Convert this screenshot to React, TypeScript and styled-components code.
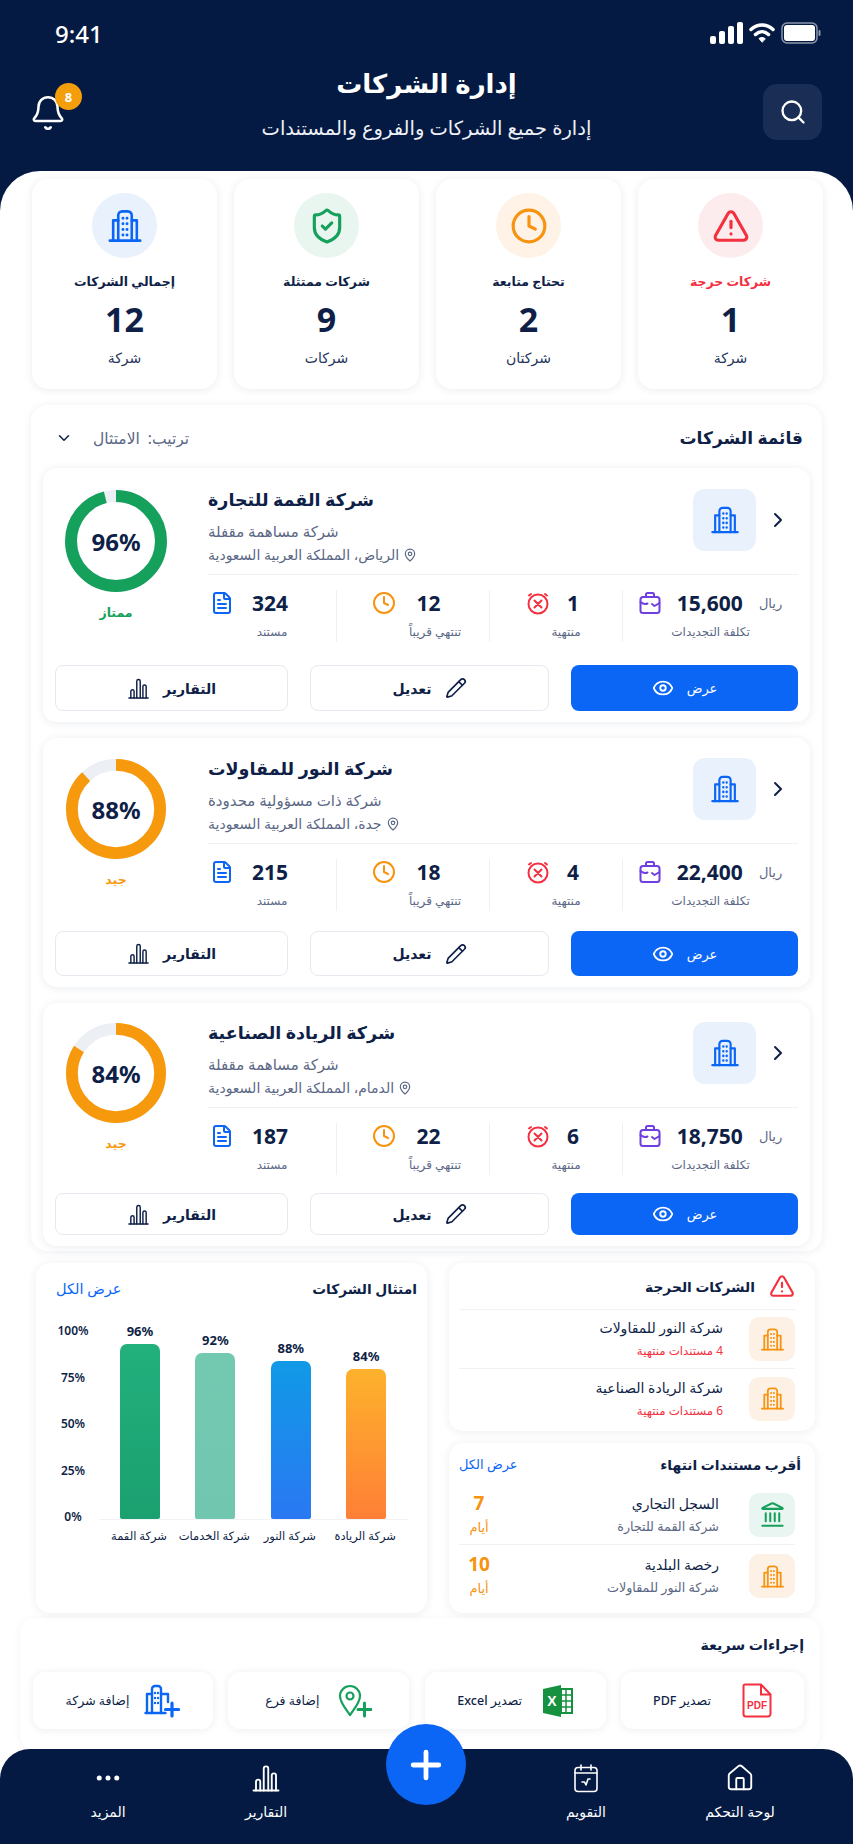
import React from "react";
import styled, { createGlobalStyle } from "styled-components";
import {
  Bell,
  ChevronDown,
  ChevronRight,
  Clock,
  Ellipsis,
  Eye,
  FileText,
  House,
  Landmark,
  MapPin,
  Pencil,
  Plus,
  Search,
  ShieldCheck,
  TriangleAlert,
} from "lucide-react";

const NAVY = "#041a42";
const INK = "#0f1f47";
const MUTED = "#5b6785";
const BLUE = "#0b66f5";
const ORANGE = "#f7930f";
const GREEN = "#15a05c";
const RED = "#f4303f";

const GlobalStyle = createGlobalStyle`
  html, body { margin: 0; padding: 0; }
  body {
    font-family: "Noto Sans", "DejaVu Sans", sans-serif;
    color: ${INK};
  }
  * { box-sizing: border-box; }
`;

const Page = styled.div`
  width: 853px;
  height: 1844px;
  background: ${NAVY};
  display: flex;
  flex-direction: column;
  overflow: hidden;
`;

const Header = styled.header`
  height: 171px;
  flex: none;
  color: #fff;
  display: flex;
  flex-direction: column;
`;

const StatusBar = styled.div`
  direction: ltr;
  height: 66px;
  padding: 0 32px 0 55px;
  display: flex;
  align-items: center;
  justify-content: space-between;
  font-size: 24px;
  font-weight: 500;
`;

const StatusIcons = styled.div`
  display: flex;
  gap: 6px;
  align-items: center;
`;

const HeaderRow = styled.div`
  direction: ltr;
  flex: 1;
  padding: 0 31px;
  display: grid;
  grid-template-columns: 80px 1fr 80px;
  align-items: start;
`;

const BellWrap = styled.div`
  position: relative;
  width: 50px;
  height: 60px;
  margin: 28px 0 0 -2px;
`;

const BellBadge = styled.span`
  position: absolute;
  left: 26px;
  top: -11px;
  width: 27px;
  height: 27px;
  border-radius: 50%;
  background: #f59e0b;
  font-size: 13px;
  font-weight: 700;
  display: flex;
  align-items: center;
  justify-content: center;
`;

const HeaderTitles = styled.div`
  direction: rtl;
  text-align: center;
`;

const HeaderTitle = styled.h1`
  margin: -3px 0 0;
  font-size: 26px;
  line-height: 40px;
  font-weight: 700;
`;

const HeaderSub = styled.p`
  margin: 10px 0 0;
  font-size: 19.500px;
  line-height: 30px;
  color: #eef1f7;
`;

const SearchButton = styled.div`
  justify-self: end;
  margin-top: 18px;
  width: 59px;
  height: 56px;
  border-radius: 14px;
  background: #1a2d54;
  display: flex;
  align-items: center;
  justify-content: center;
`;

const Sheet = styled.main`
  flex: 1;
  min-height: 0;
  position: relative;
  background: #fff;
  border-radius: 40px 40px 0 0;
  padding-top: 8px;
  display: flex;
  flex-direction: column;
`;

const StatsGrid = styled.section`
  padding: 0 30px;
  display: grid;
  grid-template-columns: repeat(4, 185px);
  gap: 17px;
`;

const StatCard = styled.div`
  height: 210px;
  border-radius: 16px;
  background: #fff;
  box-shadow: 0 1px 8px rgba(20, 40, 90, 0.09);
  padding-top: 14px;
  display: flex;
  flex-direction: column;
  align-items: center;
`;

const StatCircle = styled.div<{ $bg: string }>`
  width: 65px;
  height: 65px;
  border-radius: 50%;
  background: ${(p) => p.$bg};
  display: flex;
  align-items: center;
  justify-content: center;
`;

const StatLabel = styled.div<{ $red?: boolean }>`
  margin-top: 13px;
  font-size: 12.500px;
  line-height: 22px;
  font-weight: 600;
  color: ${(p) => (p.$red ? RED : INK)};
`;

const StatValue = styled.div`
  margin-top: 5px;
  font-size: 34px;
  line-height: 42px;
  font-weight: 700;
`;

const StatUnit = styled.div`
  margin-top: 7px;
  font-size: 14px;
  line-height: 22px;
  color: #24345c;
  font-weight: 500;
`;

const ListPanel = styled.section`
  margin: 16px 31px 0;
  padding: 0 12px 5px;
  border-radius: 16px;
  box-shadow: 0 1px 8px rgba(20, 40, 90, 0.08);
`;

const ListHead = styled.div`
  height: 63px;
  padding: 2px 7px 0 12px;
  display: flex;
  align-items: center;
  justify-content: space-between;
`;

const ListTitle = styled.h2`
  margin: 0;
  font-size: 17px;
  font-weight: 700;
`;

const SortBox = styled.div`
  display: flex;
  align-items: center;
  gap: 20px;
  font-size: 15.500px;
  color: ${MUTED};
  white-space: pre;
`;

const CompanyCard = styled.article<{ $h: number; $pad: number }>`
  height: ${(p) => p.$h}px;
  margin-bottom: 16px;
  padding: ${(p) => p.$pad}px 12px 11px;
  border-radius: 14px;
  background: #fff;
  box-shadow: 0 1px 8px rgba(20, 40, 90, 0.09);
  display: flex;
  flex-direction: column;
  justify-content: space-between;
  &:last-child { margin-bottom: 0; }
`;

const CardTop = styled.div`
  display: flex;
`;

const CardBody = styled.div`
  flex: 1;
  min-width: 0;
`;

const CompanyHead = styled.div`
  display: flex;
  align-items: flex-start;
  height: 77px;
`;

const ChevronSlot = styled.div`
  width: 32px;
  height: 62px;
  display: flex;
  align-items: center;
  justify-content: center;
  margin-right: 4px;
`;

const CompanyTile = styled.div`
  width: 63px;
  height: 62px;
  border-radius: 12px;
  background: #e9f1fd;
  margin-right: 6px;
  display: flex;
  align-items: center;
  justify-content: center;
`;

const CompanyInfo = styled.div`
  margin: -4px auto 0 0;
  display: flex;
  flex-direction: column;
  align-items: flex-end;
`;

const CompanyName = styled.h3`
  margin: 0 0 6px;
  font-size: 17.500px;
  line-height: 28px;
  font-weight: 700;
`;

const CompanyMeta = styled.div<{ $size: number }>`
  font-size: ${(p) => p.$size}px;
  line-height: 24px;
  color: ${MUTED};
  display: flex;
  align-items: center;
  gap: 4px;
`;

const Metrics = styled.div`
  margin-top: 8px;
  border-top: 1px solid #eef0f5;
  padding-top: 15px;
  display: grid;
  grid-template-columns: 176px 133px 153px 128px;
`;

const Metric = styled.div`
  border-left: 1px solid #eef0f5;
  height: 52px;
  display: flex;
  flex-direction: column;
  align-items: center;
  &:last-child { border-left: 0; }
`;

const MetricTop = styled.div<{ $right?: number; $gap: number }>`
  direction: ltr;
  display: flex;
  align-items: center;
  gap: ${(p) => p.$gap}px;
  height: 26px;
  margin-right: ${(p) => p.$right ?? 0}px;
`;

const MetricValue = styled.span`
  font-size: 21px;
  font-weight: 700;
`;

const Currency = styled.span`
  font-size: 13px;
  color: ${MUTED};
`;

const MetricLabel = styled.div<{ $left?: number }>`
  margin-top: 7px;
  margin-left: ${(p) => p.$left ?? 0}px;
  font-size: 12px;
  line-height: 18px;
  color: ${MUTED};
`;

const RingColumn = styled.div`
  width: 153px;
  flex: none;
  padding: 1px 31px 0 0;
  display: flex;
  flex-direction: column;
  align-items: center;
`;

const RingBox = styled.div<{ $size: number }>`
  position: relative;
  width: ${(p) => p.$size}px;
  height: ${(p) => p.$size}px;
`;

const RingText = styled.div`
  position: absolute;
  inset: 0;
  display: flex;
  align-items: center;
  justify-content: center;
  direction: ltr;
  font-size: 24px;
  font-weight: 700;
`;

const RingLabel = styled.div<{ $color: string }>`
  margin-top: 11px;
  font-size: 12.500px;
  line-height: 20px;
  font-weight: 600;
  color: ${(p) => p.$color};
`;

const Actions = styled.div`
  display: grid;
  grid-template-columns: 227px 239px 233px;
  gap: 22px;
  justify-content: space-between;
`;

const ActionButton = styled.div<{ $primary?: boolean; $h: number }>`
  height: ${(p) => p.$h}px;
  border-radius: 8px;
  border: ${(p) => (p.$primary ? "0" : "1.5px solid #e6e9ef")};
  background: ${(p) => (p.$primary ? BLUE : "#fff")};
  color: ${(p) => (p.$primary ? "#fff" : INK)};
  font-size: ${(p) => (p.$primary ? 13 : 14)}px;
  font-weight: ${(p) => (p.$primary ? 500 : 600)};
  display: flex;
  align-items: center;
  justify-content: center;
  gap: 13px;
`;

const LowerGrid = styled.section`
  margin-top: 12px;
  padding: 0 38px 0 36px;
  display: grid;
  grid-template-columns: 366px 391px;
  justify-content: space-between;
`;

const RightStack = styled.div`
  display: flex;
  flex-direction: column;
  gap: 12px;
`;

const Panel = styled.div<{ $h: number }>`
  height: ${(p) => p.$h}px;
  border-radius: 14px;
  background: #fff;
  box-shadow: 0 1px 10px rgba(20, 40, 90, 0.08);
`;

const PanelInner = styled.div`
  padding: 0 20px 0 10px;
`;

const PanelHead = styled.div<{ $h: number }>`
  height: ${(p) => p.$h}px;
  display: flex;
  align-items: center;
  justify-content: space-between;
`;

const AlertHead = styled(PanelHead)`
  justify-content: flex-start;
  gap: 14px;
  border-bottom: 1px solid #f0f2f6;
`;

const DocsHead = styled(PanelHead)`
  margin-right: -6px;
`;

const PanelTitle = styled.h3`
  margin: 0;
  font-size: 13.800px;
  font-weight: 700;
`;

const ViewAll = styled.span<{ $size: number }>`
  font-size: ${(p) => p.$size}px;
  font-weight: 500;
  color: ${BLUE};
`;

const MiniRow = styled.div<{ $h: number; $gap: number }>`
  height: ${(p) => p.$h}px;
  display: flex;
  align-items: center;
  gap: ${(p) => p.$gap}px;
  border-bottom: 1px solid #f0f2f6;
  &:last-child { border-bottom: 0; }
`;

const MiniTile = styled.div<{ $bg: string }>`
  width: 46px;
  height: 44px;
  flex: none;
  border-radius: 10px;
  background: ${(p) => p.$bg};
  display: flex;
  align-items: center;
  justify-content: center;
`;

const MiniText = styled.div`
  flex: 1;
  min-width: 0;
`;

const MiniName = styled.div`
  font-size: 14px;
  line-height: 22px;
  font-weight: 500;
`;

const MiniSub = styled.div<{ $color: string; $size: number }>`
  font-size: ${(p) => p.$size}px;
  line-height: 22px;
  color: ${(p) => p.$color};
`;

const Days = styled.div`
  width: 40px;
  text-align: center;
  color: ${ORANGE};
  font-size: 13px;
  line-height: 24px;
`;

const DaysNum = styled.div`
  font-size: 19px;
  font-weight: 700;
`;

const ChartHead = styled(PanelHead)`
  padding: 0 10px 0 20px;
`;

const ChartArea = styled.div`
  direction: ltr;
  display: flex;
  padding: 8px 0 0 20px;
  height: 207px;
`;

const YAxis = styled.div`
  width: 34px;
  flex: none;
  height: 200px;
  margin-top: 3px;
  display: flex;
  flex-direction: column;
  justify-content: space-between;
  align-items: center;
  font-size: 12px;
  font-weight: 600;
  line-height: 14px;
`;

const BarsArea = styled.div`
  margin-left: 9px;
  width: 310px;
  height: 199px;
  border-bottom: 1px solid #f1f3f7;
  padding-left: 21px;
  display: flex;
  align-items: flex-end;
  gap: 35.400px;
`;

const BarCol = styled.div`
  width: 40px;
  display: flex;
  flex-direction: column;
  align-items: center;
`;

const BarValue = styled.div`
  font-size: 13px;
  line-height: 20px;
  font-weight: 700;
  margin-bottom: 3px;
`;

const Bar = styled.div<{ $from: string; $to: string }>`
  width: 40px;
  border-radius: 7px 7px 2px 2px;
  background: linear-gradient(180deg, ${(p) => p.$from}, ${(p) => p.$to});
`;

const BarLabels = styled.div`
  direction: ltr;
  display: flex;
  padding-left: 66px;
  gap: 1.400px;
  margin-top: 7px;
`;

const BarLabel = styled.div`
  direction: rtl;
  width: 74px;
  text-align: center;
  white-space: nowrap;
  font-size: 11.500px;
  line-height: 18px;
  font-weight: 500;
`;

const QuickPanel = styled.section`
  margin: 5px 33px 0 20px;
  padding: 0 16px 0 13px;
  height: 131px;
  flex: none;
  border-radius: 14px;
  box-shadow: 0 1px 8px rgba(20, 40, 90, 0.05);
`;

const QuickTitle = styled.h3`
  margin: 0 0 1px;
  height: 53px;
  display: flex;
  align-items: center;
  font-size: 14.200px;
  font-weight: 700;
`;

const QuickGrid = styled.div`
  display: grid;
  grid-template-columns: 183px 181px 181px 180px;
  justify-content: space-between;
`;

const QuickButton = styled.div<{ $gap: number }>`
  height: 57px;
  border-radius: 12px;
  background: #fff;
  box-shadow: 0 1px 8px rgba(20, 40, 90, 0.08);
  display: flex;
  align-items: center;
  justify-content: center;
  gap: ${(p) => p.$gap}px;
  font-size: 12.500px;
  font-weight: 500;
`;

const BottomNav = styled.nav`
  margin-top: auto;
  height: 95px;
  flex: none;
  border-radius: 30px 30px 0 0;
  background: ${NAVY};
  color: #fff;
  padding: 0 38px;
  display: grid;
  grid-template-columns: 150px 158px 1fr 176px 140px;
`;

const NavItem = styled.div`
  display: flex;
  flex-direction: column;
  align-items: center;
  padding-top: 14px;
  font-size: 14px;
  gap: 9px;
  white-space: nowrap;
`;

const Fab = styled.div`
  position: absolute;
  left: 386px;
  bottom: 39px;
  width: 80px;
  height: 81px;
  border-radius: 50%;
  background: ${BLUE};
  display: flex;
  align-items: center;
  justify-content: center;
`;

const BuildingIcon = ({ size = 30, color = BLUE }: { size?: number; color?: string }) => (
  <svg width={size} height={size} viewBox="0 0 32 32" fill="none" stroke={color} strokeWidth="2.300" strokeLinecap="round" strokeLinejoin="round">
    <path d="M2.500 29h27" />
    <path d="M10 29V6.500A3.500 3.500 0 0 1 13.500 3h5A3.500 3.500 0 0 1 22 6.500V29" />
    <path d="M10 11H5.500v18M22 11h4.500v18" />
    <path d="M14.200 9v.1M17.800 9v.1M14.200 14v.1M17.800 14v.1M14.200 19v.1M17.800 19v.1M14.200 24v.1M17.800 24v.1" strokeWidth="2.600" />
  </svg>
);

const ReportsIcon = ({ size = 24, color = "#fff" }: { size?: number; color?: string }) => (
  <svg width={size} height={size} viewBox="0 0 24 24" fill="none" stroke={color} strokeWidth="1.500" strokeLinecap="round" strokeLinejoin="round">
    <path d="M2 22h20" />
    <path d="M4 22v-7a1.700 1.700 0 0 1 3.400 0v7" />
    <path d="M10.200 22V4.500a1.800 1.800 0 0 1 3.600 0V22" />
    <path d="M16.600 22V10a1.700 1.700 0 0 1 3.400 0v12" />
  </svg>
);

const WalletIcon = () => (
  <svg width="22" height="24" viewBox="0 0 22 24" fill="none" stroke="#6d3fe0" strokeWidth="2" strokeLinecap="round" strokeLinejoin="round">
    <rect x="1.500" y="6" width="19" height="16" rx="2.500" />
    <path d="M7 6V3.500A1.500 1.500 0 0 1 8.500 2h5A1.500 1.500 0 0 1 15 3.500V6" />
    <path d="M1.500 11c3 2.500 5 2.500 7 1.500M13 13l2.500 2 5-3" />
  </svg>
);

const ExpiredIcon = () => (
  <svg width="24" height="24" viewBox="0 0 24 24" fill="none" stroke={RED} strokeWidth="2" strokeLinecap="round">
    <circle cx="12" cy="13" r="9.500" />
    <path d="M8.500 9.500l7 7M15.500 9.500l-7 7" />
    <path d="M3 4.500L5 3M21 4.500L19 3" />
  </svg>
);

const SignalIcon = () => (
  <svg width="33" height="22" viewBox="0 0 33 22" fill="#fff">
    <rect x="0" y="14" width="6" height="8" rx="2" />
    <rect x="9" y="9" width="6" height="13" rx="2" />
    <rect x="18" y="4" width="6" height="18" rx="2" />
    <rect x="27" y="0" width="6" height="22" rx="2" />
  </svg>
);

const WifiIcon = () => (
  <svg width="26" height="22" viewBox="0 0 26 22" fill="none" stroke="#fff" strokeWidth="3.500" strokeLinecap="round">
    <path d="M2 7.500c6.500-6 15.500-6 22 0" />
    <path d="M6.500 12.500c4-3.800 9-3.800 13 0" />
    <path d="M13 20l-3-3.500c1.800-1.400 4.200-1.400 6 0z" fill="#fff" strokeWidth="1" strokeLinejoin="round" />
  </svg>
);

const BatteryIcon = () => (
  <svg width="40" height="22" viewBox="0 0 40 22">
    <rect x="1" y="1" width="35" height="20" rx="5" fill="none" stroke="#8b97ad" strokeWidth="1.500" />
    <rect x="3" y="3" width="31" height="16" rx="3" fill="#fff" />
    <rect x="37.500" y="8" width="2" height="6" rx="1" fill="#8b97ad" />
  </svg>
);

const CalendarIcon = () => (
  <svg width="28" height="30" viewBox="0 0 28 30" fill="none" stroke="#fff" strokeWidth="1.600" strokeLinecap="round" strokeLinejoin="round">
    <rect x="3" y="4.500" width="22" height="24" rx="3" />
    <path d="M3 10h22M9 2v5M19 2v5" />
    <path d="M10 19h2.500l1.500 3 2-6h2" />
  </svg>
);

const PdfIcon = () => (
  <svg width="30" height="35" viewBox="0 0 30 35" fill="none">
    <path d="M3 1.500h16l9.500 10V31a2.500 2.500 0 0 1-2.500 2.500H4A2.500 2.500 0 0 1 1.500 31V3A1.500 1.500 0 0 1 3 1.500z" stroke={RED} strokeWidth="2" />
    <path d="M19 1.500v10h9.500" stroke={RED} strokeWidth="2" />
    <text x="15" y="26" textAnchor="middle" fontSize="10" fontWeight="700" fill={RED} fontFamily="Liberation Sans, sans-serif">PDF</text>
  </svg>
);

const ExcelIcon = () => (
  <svg width="30" height="32" viewBox="0 0 30 32">
    <path d="M0 4l18-4v32L0 28z" fill="#15913f" />
    <rect x="18" y="4" width="11" height="24" fill="#fff" stroke="#15913f" strokeWidth="2" />
    <path d="M18 10h11M18 16h11M18 22h11M23 4v24" stroke="#15913f" strokeWidth="1.500" />
    <text x="9" y="21" textAnchor="middle" fontSize="14" fontWeight="700" fill="#fff" fontFamily="Liberation Sans, sans-serif">X</text>
  </svg>
);

const AddCompanyIcon = () => (
  <svg width="36" height="34" viewBox="0 0 36 34" fill="none" stroke={BLUE} strokeWidth="2.400" strokeLinecap="round" strokeLinejoin="round">
    <path d="M1.500 29h20" />
    <path d="M8 29V5a3 3 0 0 1 3-3h3a3 3 0 0 1 3 3v24" />
    <path d="M8 10H3v19M17 10h7v8" />
    <path d="M11 9v.1M14 9v.1M11 14v.1M14 14v.1M11 19v.1M14 19v.1" />
    <path d="M28 19v13M21.500 25.500h13" strokeWidth="3.200" />
  </svg>
);

const AddBranchIcon = () => (
  <svg width="34" height="34" viewBox="0 0 34 34" fill="none" stroke={GREEN} strokeWidth="2.200" strokeLinecap="round" strokeLinejoin="round">
    <path d="M12 31C7 24 2 18.500 2 12a10 10 0 0 1 20 0c0 6.500-5 12-10 19z" />
    <circle cx="12" cy="12" r="3.500" />
    <path d="M26.500 19v13M20 25.500h13" stroke={GREEN} strokeWidth="3" />
  </svg>
);

const Ring = ({ value, color, size }: { value: number; color: string; size: number }) => {
  const r = 45;
  const c = 2 * Math.PI * r;
  return (
    <RingBox $size={size}>
      <svg width={size} height={size} viewBox="0 0 102 102">
        <circle cx="51" cy="51" r={r} fill="none" stroke="#eceff3" strokeWidth="12" />
        <circle
          cx="51"
          cy="51"
          r={r}
          fill="none"
          stroke={color}
          strokeWidth="12"
          strokeDasharray={`${(c * value) / 100} ${c}`}
          transform="rotate(-90 51 51)"
        />
      </svg>
      <RingText>{value}%</RingText>
    </RingBox>
  );
};

const stats = [
  { label: "شركات حرجة", value: "1", unit: "شركة", bg: "#fdecee", red: true, icon: <TriangleAlert size={38} color={RED} strokeWidth={2} /> },
  { label: "تحتاج متابعة", value: "2", unit: "شركتان", bg: "#fef3e6", icon: <Clock size={38} color={ORANGE} strokeWidth={2} /> },
  { label: "شركات ممتثلة", value: "9", unit: "شركات", bg: "#e9f6ef", icon: <ShieldCheck size={38} color={GREEN} strokeWidth={2} /> },
  { label: "إجمالي الشركات", value: "12", unit: "شركة", bg: "#e9f1fd", icon: <BuildingIcon size={36} /> },
];

const companies = [
  { name: "شركة القمة للتجارة", type: "شركة مساهمة مقفلة", place: "الرياض، المملكة العربية السعودية", cost: "15,600", expired: "1", soon: "12", docs: "324", score: 96, rating: "ممتاز", color: GREEN, h: 254, btn: 46, pad: 21, ring: 102 },
  { name: "شركة النور للمقاولات", type: "شركة ذات مسؤولية محدودة", place: "جدة، المملكة العربية السعودية", cost: "22,400", expired: "4", soon: "18", docs: "215", score: 88, rating: "جيد", color: "#f7990c", h: 249, btn: 45, pad: 20, ring: 100 },
  { name: "شركة الريادة الصناعية", type: "شركة مساهمة مقفلة", place: "الدمام، المملكة العربية السعودية", cost: "18,750", expired: "6", soon: "22", docs: "187", score: 84, rating: "جيد", color: "#f7990c", h: 243, btn: 42, pad: 19, ring: 100 },
];

const bars = [
  { value: 96, h: 175, label: "شركة القمة", from: "#22b07d", to: "#1ba070" },
  { value: 92, h: 166, label: "شركة الخدمات", from: "#73c9b0", to: "#70c6af" },
  { value: 88, h: 158, label: "شركة النور", from: "#109ae6", to: "#2a78f3" },
  { value: 84, h: 150, label: "شركة الريادة", from: "#fdb22c", to: "#ff7f36" },
];

export default function App() {
  return (
    <Page dir="rtl">
      <GlobalStyle />
      <Header>
        <StatusBar>
          <span>9:41</span>
          <StatusIcons>
            <SignalIcon />
            <WifiIcon />
            <BatteryIcon />
          </StatusIcons>
        </StatusBar>
        <HeaderRow>
          <BellWrap>
            <Bell size={38} color="#fff" strokeWidth={1.6} />
            <BellBadge>8</BellBadge>
          </BellWrap>
          <HeaderTitles>
            <HeaderTitle>إدارة الشركات</HeaderTitle>
            <HeaderSub>إدارة جميع الشركات والفروع والمستندات</HeaderSub>
          </HeaderTitles>
          <SearchButton>
            <Search size={28} color="#fff" strokeWidth={2} />
          </SearchButton>
        </HeaderRow>
      </Header>

      <Sheet>
        <StatsGrid>
          {stats.map((s) => (
            <StatCard key={s.label}>
              <StatCircle $bg={s.bg}>{s.icon}</StatCircle>
              <StatLabel $red={s.red}>{s.label}</StatLabel>
              <StatValue>{s.value}</StatValue>
              <StatUnit>{s.unit}</StatUnit>
            </StatCard>
          ))}
        </StatsGrid>

        <ListPanel>
          <ListHead>
            <ListTitle>قائمة الشركات</ListTitle>
            <SortBox>
              <span>ترتيب:  الامتثال</span>
              <ChevronDown size={18} color={INK} />
            </SortBox>
          </ListHead>
          {companies.map((c) => (
            <CompanyCard key={c.name} $h={c.h} $pad={c.pad}>
              <CardTop>
                <CardBody>
                  <CompanyHead>
                    <ChevronSlot>
                      <ChevronRight size={24} color={INK} strokeWidth={2} />
                    </ChevronSlot>
                    <CompanyTile>
                      <BuildingIcon />
                    </CompanyTile>
                    <CompanyInfo>
                      <CompanyName>{c.name}</CompanyName>
                      <CompanyMeta $size={15}>{c.type}</CompanyMeta>
                      <CompanyMeta $size={14}>
                        <MapPin size={14} color={MUTED} />
                        {c.place}
                      </CompanyMeta>
                    </CompanyInfo>
                  </CompanyHead>
                  <Metrics>
                    <Metric>
                      <MetricTop $gap={16}>
                        <WalletIcon />
                        <MetricValue>{c.cost}</MetricValue>
                        <Currency>ريال</Currency>
                      </MetricTop>
                      <MetricLabel>تكلفة التجديدات</MetricLabel>
                    </Metric>
                    <Metric>
                      <MetricTop $right={7} $gap={17}>
                        <ExpiredIcon />
                        <MetricValue>{c.expired}</MetricValue>
                      </MetricTop>
                      <MetricLabel $left={20}>منتهية</MetricLabel>
                    </Metric>
                    <Metric>
                      <MetricTop $right={13} $gap={20}>
                        <Clock size={24} color={ORANGE} strokeWidth={2} />
                        <MetricValue>{c.soon}</MetricValue>
                      </MetricTop>
                      <MetricLabel $left={44}>تنتهي قريباً</MetricLabel>
                    </Metric>
                    <Metric>
                      <MetricTop $right={46} $gap={18}>
                        <FileText size={24} color={BLUE} strokeWidth={2} />
                        <MetricValue>{c.docs}</MetricValue>
                      </MetricTop>
                      <MetricLabel>مستند</MetricLabel>
                    </Metric>
                  </Metrics>
                </CardBody>
                <RingColumn>
                  <Ring value={c.score} color={c.color} size={c.ring} />
                  <RingLabel $color={c.color}>{c.rating}</RingLabel>
                </RingColumn>
              </CardTop>
              <Actions>
                <ActionButton $primary $h={c.btn}>
                  <span>عرض</span>
                  <Eye size={22} strokeWidth={2} />
                </ActionButton>
                <ActionButton $h={c.btn}>
                  <Pencil size={22} strokeWidth={1.8} />
                  <span>تعديل</span>
                </ActionButton>
                <ActionButton $h={c.btn}>
                  <span>التقارير</span>
                  <ReportsIcon size={23} color={INK} />
                </ActionButton>
              </Actions>
            </CompanyCard>
          ))}
        </ListPanel>

        <LowerGrid>
          <RightStack>
            <Panel $h={168}>
              <PanelInner>
                <AlertHead $h={47}>
                  <TriangleAlert size={26} color={RED} strokeWidth={2} />
                  <PanelTitle>الشركات الحرجة</PanelTitle>
                </AlertHead>
                <MiniRow $h={59} $gap={26}>
                  <MiniTile $bg="#fdf1e6">
                    <BuildingIcon size={25} color={ORANGE} />
                  </MiniTile>
                  <MiniText>
                    <MiniName>شركة النور للمقاولات</MiniName>
                    <MiniSub $color={RED} $size={11.8}>4 مستندات منتهية</MiniSub>
                  </MiniText>
                </MiniRow>
                <MiniRow $h={59} $gap={26}>
                  <MiniTile $bg="#fdf1e6">
                    <BuildingIcon size={25} color={ORANGE} />
                  </MiniTile>
                  <MiniText>
                    <MiniName>شركة الريادة الصناعية</MiniName>
                    <MiniSub $color={RED} $size={11.8}>6 مستندات منتهية</MiniSub>
                  </MiniText>
                </MiniRow>
              </PanelInner>
            </Panel>
            <Panel $h={170}>
              <PanelInner>
                <DocsHead $h={42}>
                  <PanelTitle>أقرب مستندات انتهاء</PanelTitle>
                  <ViewAll $size={13}>عرض الكل</ViewAll>
                </DocsHead>
                <MiniRow $h={60} $gap={30}>
                  <MiniTile $bg="#e9f5f1">
                    <Landmark size={27} color={GREEN} strokeWidth={1.8} />
                  </MiniTile>
                  <MiniText>
                    <MiniName>السجل التجاري</MiniName>
                    <MiniSub $color={MUTED} $size={12.7}>شركة القمة للتجارة</MiniSub>
                  </MiniText>
                  <Days>
                    <DaysNum>7</DaysNum>
                    أيام
                  </Days>
                </MiniRow>
                <MiniRow $h={62} $gap={30}>
                  <MiniTile $bg="#fdf1e6">
                    <BuildingIcon size={25} color={ORANGE} />
                  </MiniTile>
                  <MiniText>
                    <MiniName>رخصة البلدية</MiniName>
                    <MiniSub $color={MUTED} $size={12.7}>شركة النور للمقاولات</MiniSub>
                  </MiniText>
                  <Days>
                    <DaysNum>10</DaysNum>
                    أيام
                  </Days>
                </MiniRow>
              </PanelInner>
            </Panel>
          </RightStack>

          <Panel $h={350}>
            <ChartHead $h={50}>
              <PanelTitle>امتثال الشركات</PanelTitle>
              <ViewAll $size={14.5}>عرض الكل</ViewAll>
            </ChartHead>
            <ChartArea>
              <YAxis>
                {["100%", "75%", "50%", "25%", "0%"].map((t) => (
                  <span key={t}>{t}</span>
                ))}
              </YAxis>
              <BarsArea>
                {bars.map((b) => (
                  <BarCol key={b.label}>
                    <BarValue>{b.value}%</BarValue>
                    <Bar $from={b.from} $to={b.to} style={{ height: b.h }} />
                  </BarCol>
                ))}
              </BarsArea>
            </ChartArea>
            <BarLabels>
              {bars.map((b) => (
                <BarLabel key={b.label}>{b.label}</BarLabel>
              ))}
            </BarLabels>
          </Panel>
        </LowerGrid>

        <QuickPanel>
          <QuickTitle>إجراءات سريعة</QuickTitle>
          <QuickGrid>
            <QuickButton $gap={31}>
              <PdfIcon />
              <span>تصدير PDF</span>
            </QuickButton>
            <QuickButton $gap={21}>
              <ExcelIcon />
              <span>تصدير Excel</span>
            </QuickButton>
            <QuickButton $gap={19}>
              <AddBranchIcon />
              <span>إضافة فرع</span>
            </QuickButton>
            <QuickButton $gap={15}>
              <AddCompanyIcon />
              <span>إضافة شركة</span>
            </QuickButton>
          </QuickGrid>
        </QuickPanel>

        <BottomNav>
          <NavItem>
            <House size={30} strokeWidth={1.5} />
            لوحة التحكم
          </NavItem>
          <NavItem>
            <CalendarIcon />
            التقويم
          </NavItem>
          <div />
          <NavItem>
            <ReportsIcon size={30} />
            التقارير
          </NavItem>
          <NavItem>
            <Ellipsis size={30} strokeWidth={2} />
            المزيد
          </NavItem>
        </BottomNav>
        <Fab>
          <Plus size={44} color="#fff" strokeWidth={2.6} />
        </Fab>
      </Sheet>
    </Page>
  );
}
